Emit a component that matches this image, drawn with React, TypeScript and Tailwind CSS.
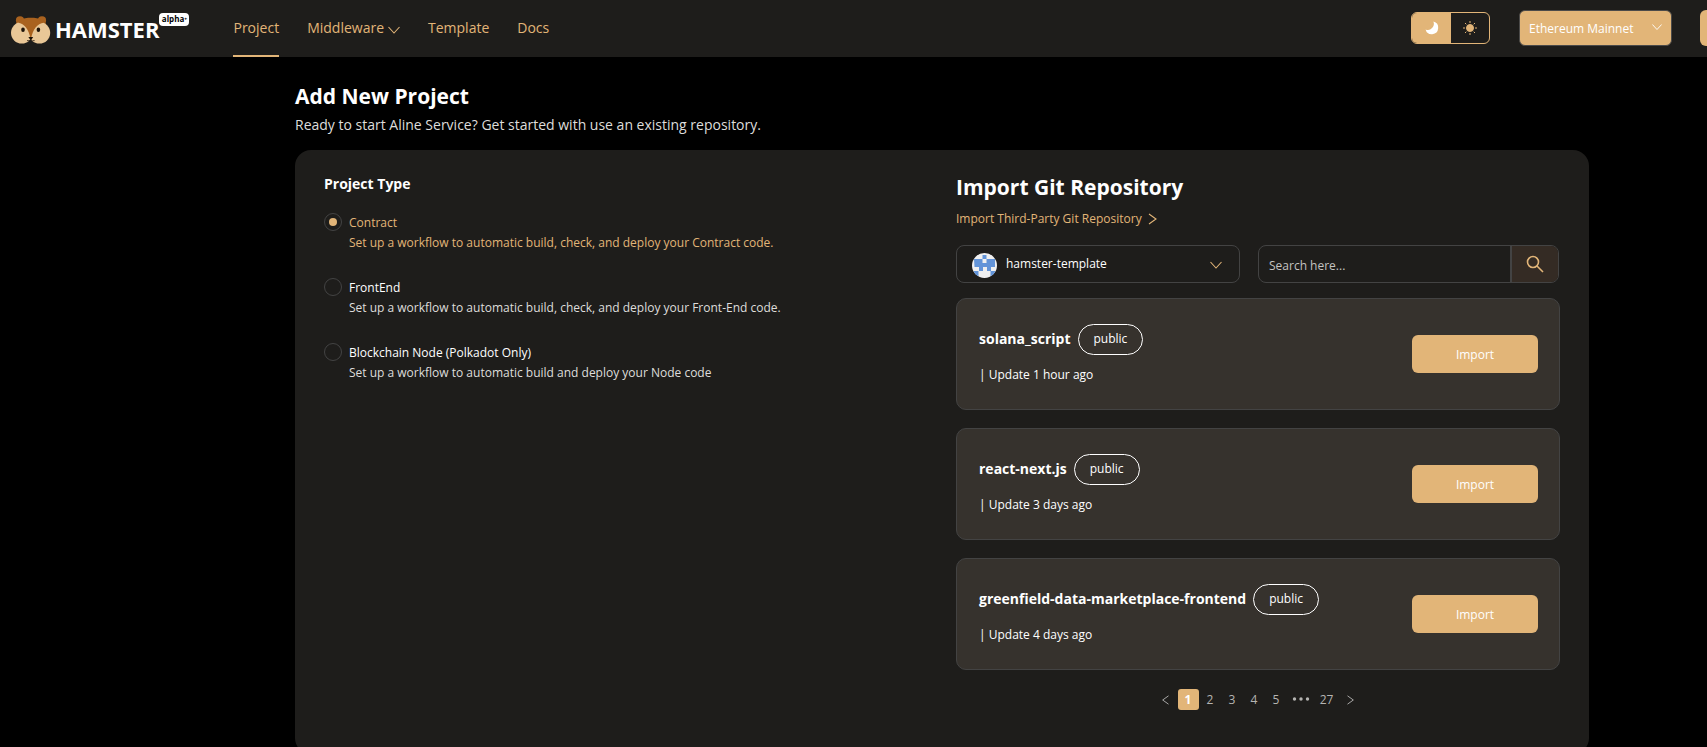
import { useState } from "react";

const repos = [
  { name: "solana_script", updated: "1 hour ago" },
  { name: "react-next.js", updated: "3 days ago" },
  { name: "greenfield-data-marketplace-frontend", updated: "4 days ago" },
];

const types = [
  { id: "contract", label: "Contract", text: "Set up a workflow to automatic build, check, and deploy your Contract code." },
  { id: "frontend", label: "FrontEnd", text: "Set up a workflow to automatic build, check, and deploy your Front-End code." },
  { id: "node", label: "Blockchain Node (Polkadot Only)", text: "Set up a workflow to automatic build and deploy your Node code" },
];

function Chevron({ d, className }: { d: string; className?: string }) {
  return (
    <svg viewBox="0 0 12 12" fill="none" stroke="currentColor" strokeWidth="1.1" className={className} aria-hidden="true">
      <path d={d} />
    </svg>
  );
}

const DOWN = "M0.5 3 L6 9 L11.5 3";
const RIGHT = "M3 1 L10 6 L3 11";
const LEFT = "M9 1 L2 6 L9 11";

function HamsterMark() {
  return (
    <svg viewBox="0 0 40 28" className="h-7 w-10" aria-hidden="true">
      <circle cx="9" cy="4.4" r="4.1" fill="#a9621f" />
      <circle cx="31" cy="4.4" r="4.1" fill="#a9621f" />
      <path d="M4.500 10 C5 4 12 1.800 20 1.800 C28 1.800 35 4 35.500 10 L30 20 H10 Z" fill="#a9621f" />
      <circle cx="10.800" cy="16.800" r="10.800" fill="#e9c797" />
      <circle cx="28.400" cy="16.800" r="10.800" fill="#e9c797" />
      <path d="M7 6.800 C13.500 7.500 17.800 14 19.400 22 H20.200 C21.800 14 26 7.500 33 6.800 L28 3 H12 Z" fill="#a9621f" />
      <ellipse cx="12" cy="13.800" rx="1.800" ry="2.200" fill="#1c1209" />
      <ellipse cx="27.400" cy="13.800" rx="1.800" ry="2.200" fill="#1c1209" />
      <path d="M17.400 21 H22.200 L20.600 23.400 H19 Z" fill="#1c1209" />
      <path d="M16 24.600 Q18.600 25.600 19.800 23.400 Q21 25.600 23.600 24.600" fill="none" stroke="#1c1209" strokeWidth="0.8" />
    </svg>
  );
}

function Header() {
  return (
    <header className="flex h-[57px] items-stretch justify-between overflow-hidden bg-[#1e1d1b] pl-[11px] text-[#e2b578]">
      <div className="flex items-stretch">
        <a href="#home" className="flex items-center gap-1 pt-0.5 text-white">
          <HamsterMark />
          <span className="flex pb-0.5">
            <span className="text-[22px] leading-7 font-bold">HAMSTER</span>
            <span className="-mt-0.5 flex h-[13px] w-[30px] items-center justify-center rounded bg-white text-[8px] font-bold text-black">alpha⁺</span>
          </span>
        </a>
        <nav className="ml-11 flex items-stretch gap-7 text-sm">
          <a href="#project" className="flex items-center border-b-2 border-[#e2b578]">Project</a>
          <a href="#middleware" className="flex items-center gap-1 border-b-2 border-transparent">
            Middleware
            <Chevron d={DOWN} className="mt-1 size-3" />
          </a>
          <a href="#template" className="flex items-center border-b-2 border-transparent">Template</a>
          <a href="#docs" className="flex items-center border-b-2 border-transparent">Docs</a>
        </nav>
      </div>
      <div className="flex shrink-0 items-center pb-0.5">
        <div className="flex h-8 w-[79px] overflow-hidden rounded-md border border-[#e2b578]">
          <button aria-label="Dark theme" className="flex w-[39px] items-center justify-center bg-[#e2b578] text-white">
            <svg viewBox="0 0 14 14" className="size-3.5" fill="currentColor" aria-hidden="true">
              <path d="M8.400 0.600 A6.400 6.400 0 1 1 0.600 8.400 A6 6 0 0 0 8.400 0.600 Z" />
            </svg>
          </button>
          <button aria-label="Light theme" className="flex flex-1 items-center justify-center">
            <svg viewBox="0 0 16 16" className="size-4" fill="currentColor" stroke="currentColor" aria-hidden="true">
              <circle cx="8" cy="8" r="3.500" />
              <path d="M8 1v2M8 13v2M1 8h2M13 8h2M3 3l1.300 1.300M11.700 11.700L13 13M3 13l1.300-1.300M11.700 4.300L13 3" />
            </svg>
          </button>
        </div>
        <div className="relative ml-[29px] text-white">
          <select aria-label="Network" className="h-9 w-[153px] appearance-none rounded-md border border-[#4b4a49] bg-[#e2b578] pt-0.5 pr-8 pl-[9px] text-xs">
            <option>Ethereum Mainnet</option>
          </select>
          <Chevron d={DOWN} className="pointer-events-none absolute top-3 right-2.5 size-[10px]" />
        </div>
        <button aria-label="Connect wallet" className="ml-7 h-9 w-[7px] rounded-l-md bg-[#e2b578]" />
      </div>
    </header>
  );
}

function Avatar() {
  return (
    <svg viewBox="0 0 25 25" className="pointer-events-none absolute top-2 left-4 size-[25px]" aria-hidden="true">
      <clipPath id="avatar-clip"><circle cx="12.500" cy="12.500" r="12.500" /></clipPath>
      <g clipPath="url(#avatar-clip)">
        <rect width="25" height="25" fill="#f0f0f0" />
        <path fill="#6394d8" d="M10.500 2h4v4h-4z M2 6h8.500v4h4v-4h8.500v8h-4v4h-4v-4h-4v4h-4v-4h-4.500z M2 18h4.500v5h-4.500z M18.500 18h4.500v5h-4.500z" />
      </g>
    </svg>
  );
}

function ProjectType() {
  const [selected, setSelected] = useState("contract");
  return (
    <fieldset className="pt-6">
      <legend className="float-left w-full text-sm leading-5 font-bold">Project Type</legend>
      <div className="clear-both flex flex-col gap-[25px] pt-[19px] text-xs leading-5">
        {types.map((t) => (
          <label key={t.id} className={t.id === selected ? "flex gap-[7px] text-[#e2b578]" : "flex gap-[7px]"}>
            <input
              type="radio"
              name="project-type"
              checked={t.id === selected}
              onChange={() => setSelected(t.id)}
              className="grid size-[18px] shrink-0 appearance-none place-items-center rounded-full border border-[#434343] before:size-2 before:rounded-full checked:before:bg-[#e2b578]"
            />
            <span>
              <span className="block">{t.label}</span>
              <span className={t.id === selected ? "block" : "block text-[#dedddb]"}>{t.text}</span>
            </span>
          </label>
        ))}
      </div>
    </fieldset>
  );
}

function RepoCard({ name, updated }: { name: string; updated: string }) {
  return (
    <li className="flex h-28 items-center justify-between rounded-[10px] border border-[#434343] bg-[#36322d] pr-[21px] pl-[22px]">
      <div>
        <div className="flex items-center gap-[7px]">
          <h3 className="text-sm font-bold">{name}</h3>
          <span className="flex h-[31px] items-center rounded-full border border-white px-[15px] text-xs">public</span>
        </div>
        <p className="mt-[10px] text-xs leading-5">| Update {updated}</p>
      </div>
      <button className="h-[38px] w-[126px] rounded-md bg-[#e2b578] pt-0.5 text-xs">Import</button>
    </li>
  );
}

function Pagination() {
  return (
    <nav aria-label="Pages" className="mt-[19px] flex items-center justify-center gap-px text-xs leading-[22px] text-[#b5b4b2]">
      <button aria-label="Previous page" className="flex h-[21px] w-[21px] items-center justify-center"><Chevron d={LEFT} className="size-[10px]" /></button>
      <button aria-current="page" className="h-[21px] w-[21px] rounded-[3px] bg-[#e2b578] font-bold text-white">1</button>
      <button className="h-[21px] w-[21px]">2</button>
      <button className="h-[21px] w-[21px]">3</button>
      <button className="h-[21px] w-[21px]">4</button>
      <button className="h-[21px] w-[21px]">5</button>
      <button aria-label="More pages" className="flex h-[21px] w-[26px] items-center justify-center pb-0.5">
        <svg viewBox="0 0 18 4" className="h-1 w-[18px]" fill="currentColor" aria-hidden="true">
          <circle cx="2.500" cy="2" r="1.700" /><circle cx="9" cy="2" r="1.700" /><circle cx="15.500" cy="2" r="1.700" />
        </svg>
      </button>
      <button className="h-[21px] w-6">27</button>
      <button aria-label="Next page" className="flex h-[21px] w-[21px] items-center justify-center"><Chevron d={RIGHT} className="size-[10px]" /></button>
    </nav>
  );
}

function ImportRepository() {
  return (
    <section className="pt-[21px]">
      <h2 className="text-[21px] leading-8 font-bold">Import Git Repository</h2>
      <a href="#third-party" className="mt-[6px] flex items-center gap-1 text-xs leading-5 text-[#e2b578]">
        Import Third-Party Git Repository
        <Chevron d={RIGHT} className="size-3" />
      </a>
      <div className="mt-4 flex gap-[18px]">
        <div className="relative w-[284px]">
          <select aria-label="Account" className="h-[38px] w-full appearance-none rounded-lg border border-[#434343] bg-transparent pr-8 pl-[49px] text-xs">
            <option>hamster-template</option>
          </select>
          <Avatar />
          <Chevron d={DOWN} className="pointer-events-none absolute top-3.5 right-[18px] size-3 text-[#e2b578]" />
        </div>
        <form className="mr-px flex h-[38px] flex-1 overflow-hidden rounded-lg border border-[#434343]" onSubmit={(e) => e.preventDefault()}>
          <input type="search" aria-label="Search repositories" placeholder="Search here..." className="min-w-0 flex-1 bg-transparent px-2.5 pt-[3px] text-xs outline-none placeholder:text-[#c4c3c1]" />
          <button aria-label="Search" className="flex w-12 items-center justify-center border-l-2 border-[#434343] bg-[#342b24] text-[#e2b578]">
            <svg viewBox="0 0 18 18" className="size-[18px]" fill="none" stroke="currentColor" strokeWidth="1.600" aria-hidden="true">
              <circle cx="7" cy="7" r="5.500" /><path d="M11 11 L17 17" />
            </svg>
          </button>
        </form>
      </div>
      <ul className="mt-[15px] flex flex-col gap-[18px]">
        {repos.map((r) => <RepoCard key={r.name} {...r} />)}
      </ul>
      <Pagination />
    </section>
  );
}

export default function App() {
  return (
    <div className="min-h-screen bg-black font-['Open_Sans','Noto_Sans',sans-serif] text-white">
      <Header />
      <main className="pt-[23px] pr-[118px] pl-[295px]">
        <h1 className="text-[21px] leading-8 font-bold">Add New Project</h1>
        <p className="mt-[3px] text-sm leading-5 text-[#dedddb]">Ready to start Aline Service? Get started with use an existing repository.</p>
        <div className="mt-[15px] grid grid-cols-2 gap-7 rounded-2xl bg-[#1e1d1b] px-[29px] pb-11">
          <ProjectType />
          <ImportRepository />
        </div>
      </main>
    </div>
  );
}
